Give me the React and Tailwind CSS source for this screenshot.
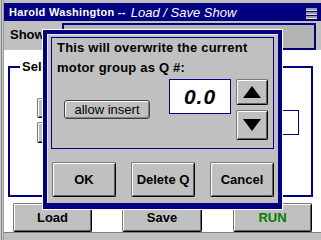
import React from 'react';

const btn =
  'flex items-center justify-center bg-[#c0c0c0] border border-t-[#7a7a7a] border-l-[#7a7a7a] border-r-black border-b-black rounded-[2px] shadow-[inset_1px_1px_0_#ffffff,inset_-1px_-1px_0_#606060] font-bold text-[13px] text-black';

function MenuIcon() {
  return (
    <svg width="11" height="12" viewBox="0 0 11 12">
      <rect x="0" y="0" width="11" height="2" fill="#9a9a9a" />
      <rect x="0" y="2" width="11" height="1" fill="#e0e0e0" />
      <rect x="0" y="4" width="11" height="2" fill="#9a9a9a" />
      <rect x="0" y="6" width="11" height="1" fill="#e0e0e0" />
      <rect x="0" y="8" width="11" height="2" fill="#9a9a9a" />
      <rect x="0" y="10" width="11" height="1" fill="#e0e0e0" />
    </svg>
  );
}

function Arrow({ up }) {
  return (
    <svg width="18" height="12" viewBox="0 0 18 12">
      <polygon points={up ? '9,0 18,12 0,12' : '0,0 18,0 9,12'} fill="#000" />
    </svg>
  );
}

export default function App() {
  return (
    <div className="relative w-[321px] h-[240px] overflow-hidden bg-[#c0c0c0] flex font-['Liberation_Sans',Arial,sans-serif]">
      {/* left window edge */}
      <div className="flex shrink-0">
        <div className="w-px bg-[#c8c8c8]" />
        <div className="w-px bg-[#888888]" />
        <div className="w-px bg-[#c8c8c8]" />
        <div className="w-px bg-[#9a9a9a]" />
      </div>

      <div className="flex-1 flex flex-col">
        <div className="h-[3px]" />
        {/* title bar */}
        <div className="h-[18px] bg-[#000080] flex items-center pl-[5px] text-white">
          <span className="font-bold text-[11px] tracking-[0.3px] mt-[1px]">Harold Washington --</span>
          <span className="italic text-[13px] ml-[5px] mt-[1px]">Load / Save Show</span>
          <div className="ml-auto mr-[4px] mt-[3px]">
            <MenuIcon />
          </div>
        </div>

        {/* header band */}
        <div className="h-[29px] flex items-start pt-[2px]">
          <div className="w-[58px] pl-[6px] mt-[4px] font-bold text-[13px] leading-[16px]">Show</div>
          <div className="w-[254px] h-[27px] bg-[#b4b4b4] border-2 border-[#000080]" />
        </div>

        {/* white body */}
        <div className="flex-1 bg-white flex flex-col pl-[4px]">
          <fieldset className="mt-[9px] w-[305px] h-[138px] border-2 border-[#000080]">
            <legend className="ml-[10px] px-[2px] font-bold text-[13px] leading-[16px]">Select</legend>
            <div className="flex pl-[27px] pr-[12px]">
              <div className="flex flex-col gap-[4px] mt-[23px]">
                <div className={btn + ' w-[80px] h-[20px]'} />
                <div className={btn + ' w-[80px] h-[21px]'} />
              </div>
              <div className="ml-auto mt-[35px] w-[110px] h-[25px] bg-white border border-[#000080]" />
            </div>
          </fieldset>

          <div className="mt-[6px] flex pl-[5px]">
            <button className={btn + ' w-[79px] h-[29px]'}>Load</button>
            <button className={btn + ' w-[80px] h-[29px] ml-[30px]'}>Save</button>
            <button className={btn + ' w-[79px] h-[29px] ml-[31px] !text-[#008000]'}>RUN</button>
          </div>
        </div>

        <div className="h-[8px] border-t border-[#808080]" />
      </div>

      {/* dialog */}
      <div className="absolute left-[42px] top-[29px] w-[241px] h-[181px] border border-white">
        <div className="h-full border-[#000080] border-t-[4px] border-l-[4px] border-r-[4px] border-b-[6px]">
          <div className="h-full bg-[#c0c0c0] border-t border-l border-[#e8e8e8] pl-[3px] pt-[2px]">
            <div className="w-[223px] h-[112px] border border-[#000080] px-[5px]">
              <p className="font-bold text-[13px] leading-[20px] tracking-[0.2px]">
                This will overwrite the current
                <br />
                motor group as Q #:
              </p>
              <div className="flex items-start">
                <button className="ml-[7px] mt-[22px] w-[86px] h-[19px] bg-[#c0c0c0] border border-[#404040] rounded-[3px] shadow-[inset_1px_1px_0_#ffffff,inset_-1px_-1px_0_#808080] text-[13px] leading-[15px] flex items-center justify-center">
                  allow insert
                </button>
                <div className="ml-[19px] mt-[1px] w-[62px] h-[35px] bg-white border border-[#000080] flex items-center justify-center">
                  <span className="italic font-bold text-[21px] tracking-[1px]">0.0</span>
                </div>
                <div className="ml-[5px] flex flex-col">
                  <button className={btn + ' w-[32px] h-[26px] mt-[1px]'}>
                    <Arrow up />
                  </button>
                  <button className={btn + ' w-[32px] h-[30px] mt-[5px]'}>
                    <Arrow />
                  </button>
                </div>
              </div>
            </div>

            <div className="flex ml-[1px] mt-[13px] gap-[15px]">
              <button className={btn + ' w-[64px] h-[35px]'}>OK</button>
              <button className={btn + ' w-[64px] h-[35px]'}>Delete Q</button>
              <button className={btn + ' w-[64px] h-[35px]'}>Cancel</button>
            </div>
          </div>
        </div>
      </div>
    </div>
  );
}
